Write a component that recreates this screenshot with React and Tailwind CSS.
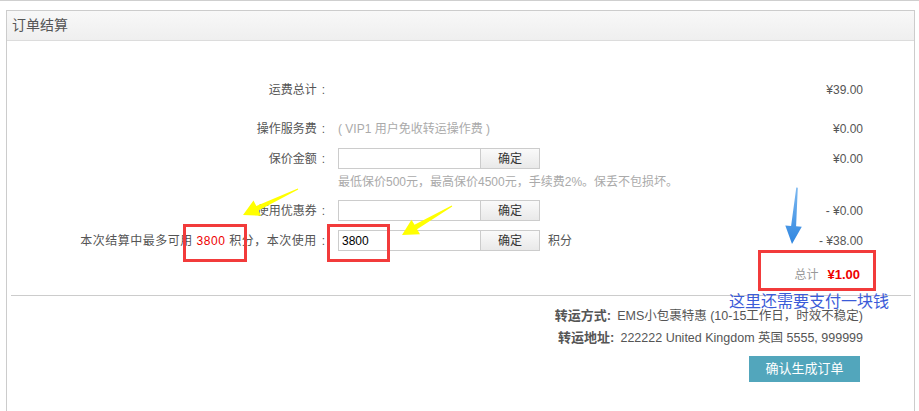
import React from "react";

const font = "font-['Liberation_Sans','Noto_Sans_CJK_SC',sans-serif]";

const Label = ({ children, className = "" }) => (
  <div className={`w-[318px] shrink-0 text-right text-[12px] text-[#555] ${className}`}>
    {children}
    <span className="ml-[5px] tracking-normal">:</span>
  </div>
);

const InputGroup = ({ value = "" }) => (
  <div className="flex">
    <input
      readOnly
      value={value}
      className={`w-[143px] h-[21px] border border-[#ccc] bg-white px-[3px] text-[12px] text-black outline-none ${font}`}
    />
    <button className="w-[60px] h-[21px] -ml-px border border-[#ccc] bg-gradient-to-b from-[#fafafa] to-[#e9e9e9] text-[12px] text-[#333]">
      确定
    </button>
  </div>
);

const Row = ({ label, labelClass, children, amount, className = "" }) => (
  <div className={`flex items-center pr-[51px] ${className}`}>
    <Label className={labelClass}>{label}</Label>
    <div className="ml-[13px] flex flex-1 items-center">{children}</div>
    <div className="text-right text-[12px] text-[#555]">{amount}</div>
  </div>
);

const Arrows = () => (
  <svg className="pointer-events-none absolute left-0 top-0" width="919" height="411">
    <defs>
      <linearGradient id="blueArrow" x1="0" y1="0" x2="0" y2="1">
        <stop offset="0" stopColor="#7cb8f0" />
        <stop offset="1" stopColor="#2f86e0" />
      </linearGradient>
    </defs>
    <polygon
      fill="#ffff00"
      points="297.8,188.4 256.3,206 253.5,200.5 243,215 261,215.8 258.5,210.5 298.2,189.6"
    />
    <polygon
      fill="#ffff00"
      points="451.7,205.5 414.5,224.8 411.5,219.8 402,235 420,234.2 417.1,229.2 452.3,206.5"
    />
    <polygon
      fill="url(#blueArrow)"
      points="796.3,187.5 791.1,225.9 785.3,225.4 792,244 801.8,226.8 796.1,226.3 797.8,187.7"
    />
  </svg>
);

export default function App() {
  return (
    <div className={`relative w-[919px] h-[411px] overflow-hidden bg-white ${font}`}>
      <div className="h-px bg-[#cfcfcf]" />
      <div className="ml-[6px] mt-[9px] w-[909px] h-[402px] border border-b-0 border-[#ccc]">
        <div className="flex h-[30px] items-center border-b border-[#dcdcdc] bg-gradient-to-b from-[#f8f8f8] to-[#efefef] pl-[5px] text-[14px] text-[#555]">
          订单结算
        </div>

        <div className="pt-[37px]">
          <Row label="运费总计" amount="¥39.00" className="h-[24px]" />
          <Row label="操作服务费" amount="¥0.00" className="mt-[15px] h-[24px]">
            <span className="text-[12px] text-[#aaa]">( VIP1 用户免收转运操作费 )</span>
          </Row>
          <Row label="保价金额" amount="¥0.00" className="mt-[7px] h-[21px]">
            <InputGroup />
          </Row>
          <div className="mt-[5px] flex h-[16px] items-center pl-[331px] text-[12px] text-[#aaa]">
            最低保价500元，最高保价4500元，手续费2%。保丢不包损坏。
          </div>
          <Row label="使用优惠券" amount="- ¥0.00" className="mt-[10px] h-[21px]">
            <InputGroup />
          </Row>
          <Row
            label={
              <>
                本次结算中最多可用 <span className="text-[#e00]">3800</span> 积分，本次使用
              </>
            }
            labelClass="tracking-[0.5px]"
            amount="- ¥38.00"
            className="mt-[9px] h-[21px]"
          >
            <InputGroup value="3800" />
            <span className="ml-[8px] text-[12px] text-[#555]">积分</span>
          </Row>

          <div className="mt-[14px] flex h-[20px] items-center justify-end pr-[54px]">
            <span className="text-[12px] text-[#999]">总计</span>
            <span className="ml-[9px] text-[13px] font-bold text-[#e00]">¥1.00</span>
          </div>

          <div className="mt-[10px] ml-[4px] mr-[3px] h-px bg-[#ccc]" />

          <div className="mt-[10px] flex h-[20px] items-center justify-end pr-[51px] text-[#555]">
            <span className="text-[13px] font-bold">转运方式:</span>
            <span className="ml-[6px] text-[12.5px]">EMS小包裹特惠 (10-15工作日，时效不稳定)</span>
          </div>
          <div className="mt-[2px] flex h-[20px] items-center justify-end pr-[51px] text-[#555]">
            <span className="text-[13px] font-bold">转运地址:</span>
            <span className="ml-[6px] text-[12.5px]">222222 United Kingdom 英国 5555, 999999</span>
          </div>
          <div className="mt-[8px] flex justify-end pr-[54px]">
            <button className="h-[26px] w-[111px] bg-[#52a6bc] text-[13px] text-white">
              确认生成订单
            </button>
          </div>
        </div>
      </div>

      <div className="absolute left-[183px] top-[224px] h-[38px] w-[64px] border-[3px] border-[#f23b3b]" />
      <div className="absolute left-[327px] top-[224px] h-[38px] w-[63px] border-[3px] border-[#f23b3b]" />
      <div className="absolute left-[758px] top-[250px] h-[41px] w-[118px] border-[3px] border-[#f23b3b]" />
      <div className="absolute left-[729px] top-[291px] text-[16px] leading-[22px] text-[#3b5bd8]">
        这里还需要支付一块钱
      </div>
      <Arrows />
    </div>
  );
}
